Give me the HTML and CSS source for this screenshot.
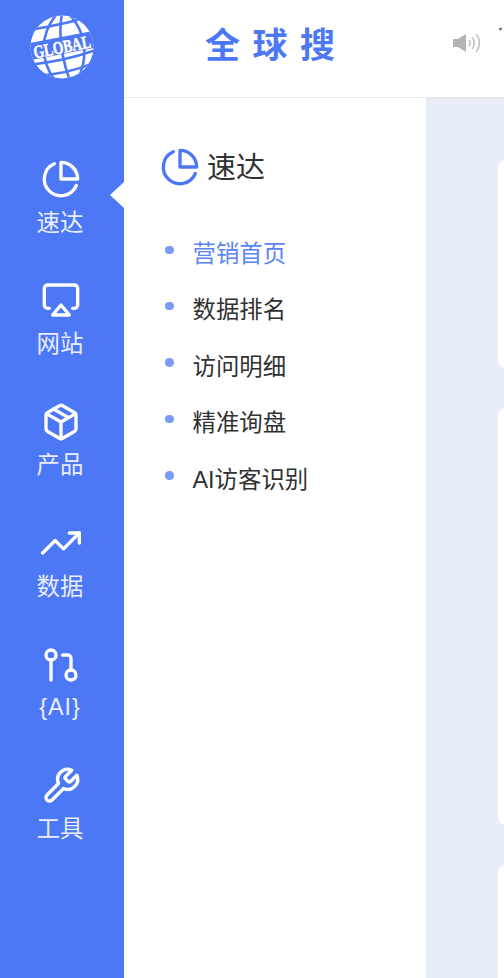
FILE: index.html
```html
<!DOCTYPE html>
<html lang="zh-CN">
<head>
<meta charset="utf-8">
<title>全球搜</title>
<link rel="stylesheet" href="styles.css">
</head>
<body>
<div class="app">
  <aside class="sidebar">
    <div class="logo">
      <svg viewBox="0 0 64 64" width="64" height="64">
        <defs><clipPath id="globe"><circle cx="32" cy="32" r="31.5"/></clipPath></defs>
        <circle cx="32" cy="32" r="31.5" fill="#fff"/>
        <g clip-path="url(#globe)" fill="none" stroke="#4d78f5" stroke-width="2.6">
          <path d="M-2 15 C18 12 44 7 62 0"/>
          <path d="M-2 50 C18 48 44 43 66 35"/>
          <path d="M4 61 C24 60 48 55 66 47"/>
          <path d="M26 0 C10 20 10 44 24 64"/>
          <path d="M32 -2 C28 20 32 44 40 66"/>
          <path d="M38 -2 C54 14 60 38 48 64"/>
          <path class="logo-band" d="M-2 37 L66 24"/>
        </g>
        <text class="logo-text" x="32" y="38" text-anchor="middle" textLength="58" lengthAdjust="spacingAndGlyphs" transform="rotate(-11 32 32)">GLOBAL</text>
      </svg>
    </div>
    <nav class="nav">
      <a class="nav-item active">
        <svg class="nav-icon" viewBox="0 0 24 24"><path d="M21.21 15.89A10 10 0 1 1 8 2.83"/><path d="M22 12A10 10 0 0 0 12 2v10z"/></svg>
        <span>速达</span>
      </a>
      <a class="nav-item">
        <svg class="nav-icon" viewBox="0 0 24 24"><path d="M5 17H4a2 2 0 0 1-2-2V5a2 2 0 0 1 2-2h16a2 2 0 0 1 2 2v10a2 2 0 0 1-2 2h-1"/><polygon points="12 15 17 21 7 21 12 15"/></svg>
        <span>网站</span>
      </a>
      <a class="nav-item">
        <svg class="nav-icon" viewBox="0 0 24 24"><path d="M16.5 9.4l-9-5.19"/><path d="M21 16V8a2 2 0 0 0-1-1.73l-7-4a2 2 0 0 0-2 0l-7 4A2 2 0 0 0 3 8v8a2 2 0 0 0 1 1.73l7 4a2 2 0 0 0 2 0l7-4A2 2 0 0 0 21 16z"/><polyline points="3.27 6.96 12 12.01 20.73 6.96"/><line x1="12" y1="22.08" x2="12" y2="12"/></svg>
        <span>产品</span>
      </a>
      <a class="nav-item">
        <svg class="nav-icon" viewBox="0 0 24 24"><polyline points="23 6 13.5 15.5 8.5 10.5 1 18"/><polyline points="17 6 23 6 23 12"/></svg>
        <span>数据</span>
      </a>
      <a class="nav-item">
        <svg class="nav-icon" viewBox="0 0 24 24"><circle cx="18" cy="18" r="3"/><circle cx="6" cy="6" r="3"/><path d="M13 6h3a2 2 0 0 1 2 2v7"/><line x1="6" y1="9" x2="6" y2="21"/></svg>
        <span class="latin">{AI}</span>
      </a>
      <a class="nav-item">
        <svg class="nav-icon" viewBox="0 0 24 24"><path d="M14.7 6.3a1 1 0 0 0 0 1.4l1.6 1.6a1 1 0 0 0 1.4 0l3.77-3.77a6 6 0 0 1-7.94 7.94l-6.91 6.91a2.12 2.12 0 0 1-3-3l6.91-6.91a6 6 0 0 1 7.94-7.94l-3.76 3.76z"/></svg>
        <span>工具</span>
      </a>
    </nav>
  </aside>

  <div class="right">
    <header class="topbar">
      <div class="brand">全球搜</div>
      <svg class="speaker" viewBox="0 0 28 20" width="28" height="20">
        <path class="speaker-body" d="M0 6h5l8-5v18l-8-5H0z"/>
        <path class="speaker-wave" d="M16 7c1.5 2 1.5 4 0 6"/>
        <path class="speaker-wave" d="M19 4c3 3.500 3 8.500 0 12"/>
        <path class="speaker-wave" d="M23 1c4.500 5 4.500 13 0 18"/>
      </svg>
      <i class="notice-mark"></i>
    </header>
    <div class="body">
      <section class="submenu">
        <h2 class="sub-title">
          <svg class="sub-icon" viewBox="0 0 24 24"><path d="M21.21 15.89A10 10 0 1 1 8 2.83"/><path d="M22 12A10 10 0 0 0 12 2v10z"/></svg>
          <span>速达</span>
        </h2>
        <ul class="sub-list">
          <li class="current">营销首页</li>
          <li>数据排名</li>
          <li>访问明细</li>
          <li>精准询盘</li>
          <li>AI访客识别</li>
        </ul>
      </section>
      <main class="content">
        <div class="card card-a"></div>
        <div class="card card-b"></div>
        <div class="card card-c"></div>
      </main>
    </div>
  </div>
</div>
</body>
</html>
```

FILE: styles.css
```css
* { box-sizing: border-box; }
html, body { margin: 0; height: 100%; overflow: hidden; }
body {
  font-family: "Liberation Sans", "Noto Sans CJK SC", sans-serif;
  background: #fff;
}
.app { display: flex; height: 978px; width: 504px; overflow: hidden; }

.sidebar {
  flex: 0 0 124px;
  background: #4d78f5;
  display: flex;
  flex-direction: column;
  align-items: center;
  padding-top: 15px;
}
.logo { height: 64px; width: 64px; }
.logo svg { display: block; overflow: visible; }
.logo-band { stroke-width: 17; }
.logo-text {
  font-family: "Liberation Serif", serif;
  font-weight: 700;
  font-size: 18px;
  fill: #fff;
  stroke: #fff;
  stroke-width: 0.5px;
}
.nav { width: 100%; margin-top: 80px; display: flex; flex-direction: column; }
.nav-item {
  position: relative;
  height: 121.4px;
  padding-right: 2px;
  display: flex;
  flex-direction: column;
  align-items: center;
  color: #e9eefd;
  font-size: 23.4px;
  line-height: 30px;
}
.nav-item span { margin-top: 8.5px; margin-right: 2px; }
.nav-item .latin { margin-top: 7px; letter-spacing: 1px; }
.nav-icon {
  width: 40px;
  height: 40px;
  fill: none;
  stroke: #fff;
  stroke-width: 2;
  stroke-linecap: round;
  stroke-linejoin: round;
}
.nav-item.active::after {
  content: "";
  position: absolute;
  right: 0;
  top: 23px;
  border-style: solid;
  border-width: 13px 14px 13px 0;
  border-color: transparent #fff transparent transparent;
}

.right { flex: 1; min-width: 0; display: flex; flex-direction: column; }
.topbar {
  position: relative;
  flex: 0 0 98px;
  display: flex;
  align-items: center;
  background: #fff;
  border-bottom: 1px solid #e7eaf0;
  padding-left: 81px;
}
.brand {
  color: #4d78f5;
  font-family: "Noto Sans CJK SC", sans-serif;
  font-weight: 700;
  font-size: 35px;
  letter-spacing: 12.5px;
  width: 248px;
  white-space: nowrap;
  margin-top: -13px;
}
.speaker { flex: none; margin-top: -12px; }
.speaker-body { fill: #b4b4b4; }
.speaker-wave { fill: none; stroke: #c2c2c2; stroke-width: 1.600; }
.notice-mark {
  position: absolute;
  left: 375px;
  top: 28px;
  width: 3px;
  height: 2px;
  background: #5a6a86;
  transform: rotate(-35deg);
}

.body { flex: 1; display: flex; min-height: 0; }
.submenu {
  flex: 0 0 302px;
  background: #fff;
  padding: 50px 0 0 37px;
}
.sub-title {
  margin: 0;
  display: flex;
  align-items: center;
  gap: 7px;
  font-weight: 400;
  font-size: 29px;
  line-height: 40px;
  color: #303133;
}
.sub-icon {
  width: 40px;
  height: 40px;
  margin: -2px 0 0 -1px;
  fill: none;
  stroke: #4d78f5;
  stroke-width: 2;
  stroke-linecap: round;
  stroke-linejoin: round;
}
.sub-list {
  list-style: none;
  margin: 37px 0 0;
  padding: 0;
}
.sub-list li {
  position: relative;
  height: 56.4px;
  line-height: 58px;
  padding-left: 31.5px;
  font-size: 23.4px;
  color: #303133;
}
.sub-list li::before {
  content: "";
  position: absolute;
  left: 4px;
  top: 20.5px;
  width: 8.5px;
  height: 8.5px;
  border-radius: 50%;
  background: #7a9bf8;
}
.sub-list li.current { color: #5b83f7; }

.content {
  flex: 1;
  min-width: 0;
  background: #e8eef7;
  border-left: 1px solid #e3e8f1;
  box-shadow: inset 0 1px 1px #dde3ec;
  padding: 62px 0 0 71px;
  display: flex;
  flex-direction: column;
  gap: 40px;
  overflow: hidden;
}
.card { flex: none; background: #fff; border-radius: 8px 0 0 8px; width: 40px; }
.card-a { height: 208px; }
.card-b { height: 417px; }
.card-c { height: 200px; }
```
